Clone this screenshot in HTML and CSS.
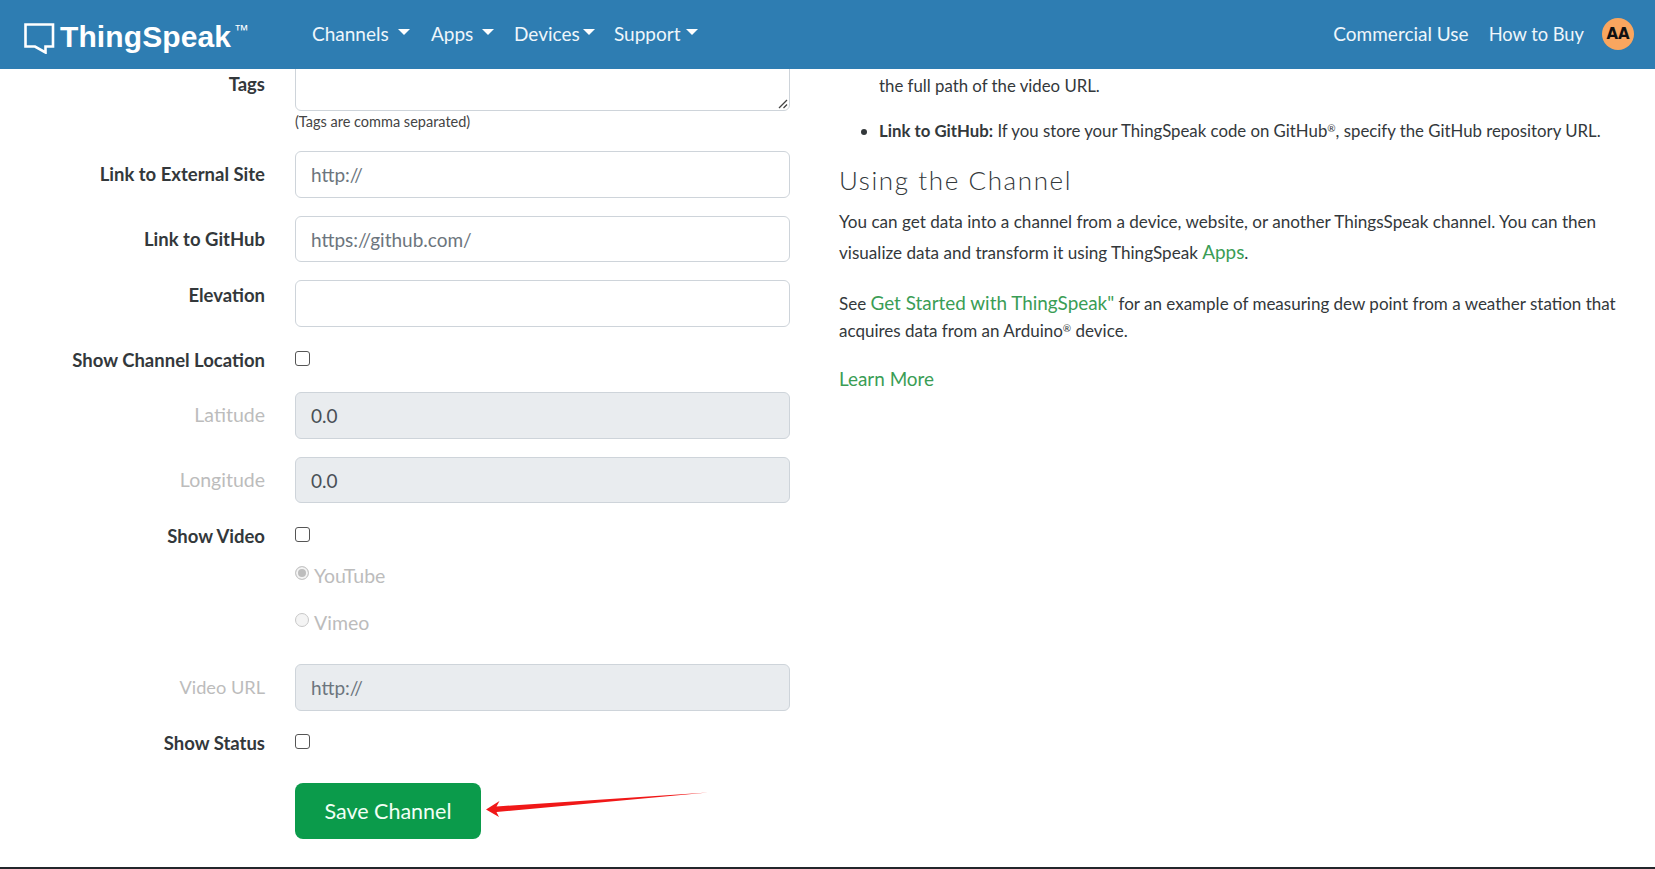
FILE: index.html
```html
<!DOCTYPE html>
<html lang="en">
<head>
<meta charset="utf-8">
<title>ThingSpeak</title>
<link rel="stylesheet" href="styles.css">
</head>
<body>
<header class="nav">
  <a class="brand">
    <svg class="bubble" width="32" height="32" viewBox="0 0 32 32"><path d="M1.5 2.5H29V24.5H21.5V30.5L11 24.5H1.5Z" fill="none" stroke="#fff" stroke-width="2.6"/></svg>
    <span class="brand-name">ThingSpeak</span><span class="tm">™</span>
  </a>
  <nav class="menu">
    <a class="item i1">Channels<i class="caret"></i></a>
    <a class="item i2">Apps<i class="caret"></i></a>
    <a class="item i3">Devices<i class="caret tight"></i></a>
    <a class="item">Support<i class="caret wide"></i></a>
  </nav>
  <div class="right">
    <a class="item">Commercial Use</a>
    <a class="item buy">How to Buy</a>
    <span class="avatar">AA</span>
  </div>
</header>
<main class="page">
  <section class="form">
    <div class="row tags-row"><label class="lab lab-tags">Tags</label>
      <div class="field"><div class="textarea"><svg class="grip" width="12" height="12" viewBox="0 0 12 12"><path d="M11 3L3 11M11 7.5L7.5 11" stroke="#444" stroke-width="1.3"/></svg></div><small class="help">(Tags are comma separated)</small></div></div>
    <div class="row mid"><label class="lab">Link to External Site</label><div class="field"><div class="input ph">http://</div></div></div>
    <div class="row mid"><label class="lab">Link to GitHub</label><div class="field"><div class="input ph">https://github.com/</div></div></div>
    <div class="row elev-row"><label class="lab lab-top">Elevation</label><div class="field"><div class="input"></div></div></div>
    <div class="row check-row"><label class="lab">Show Channel Location</label><div class="field"><span class="box"></span></div></div>
    <div class="row mid"><label class="lab off">Latitude</label><div class="field"><div class="input dis">0.0</div></div></div>
    <div class="row mid"><label class="lab off">Longitude</label><div class="field"><div class="input dis">0.0</div></div></div>
    <div class="row check-row video-row"><label class="lab">Show Video</label><div class="field"><span class="box"></span></div></div>
    <div class="row radio-row"><span class="lab"></span><div class="field radio-line"><span class="radio on"></span><span class="off">YouTube</span></div></div>
    <div class="row radio-row r2"><span class="lab"></span><div class="field radio-line"><span class="radio"></span><span class="off">Vimeo</span></div></div>
    <div class="row mid"><label class="lab off url">Video URL</label><div class="field"><div class="input dis ph">http://</div></div></div>
    <div class="row check-row status-row"><label class="lab">Show Status</label><div class="field"><span class="box"></span></div></div>
    <div class="row"><span class="lab"></span><div class="field"><a class="save">Save Channel</a></div></div>
  </section>
  <section class="help-col">
    <ul class="list">
      <li><b>Video URL:</b> If you have a YouTube<sup class="reg">®</sup> or Vimeo<sup class="reg">®</sup> video that displays your channel information, specify<br>the full path of the video URL.</li>
      <li><b>Link to GitHub:</b> If you store your ThingSpeak code on GitHub<sup class="reg">®</sup>, specify the GitHub repository URL.</li>
    </ul>
    <h2 class="heading">Using the Channel</h2>
    <p class="p1">You can get data into a channel from a device, website, or another ThingsSpeak channel. You can then visualize data and transform it using ThingSpeak <a class="link big">Apps</a>.</p>
    <p class="p2">See <a class="link big">Get Started with ThingSpeak"</a> for an example of measuring dew point from a weather station that acquires data from an Arduino<sup class="reg">®</sup> device.</p>
    <p class="p3"><a class="link big">Learn More</a></p>
  </section>
  <svg class="arrow" width="230" height="32" viewBox="0 0 230 32"><path d="M0 23.5L13.5 15L10.5 20.5L222 6.5L10.5 26L13 31Z" fill="#f01818"/></svg>
</main>
<div class="foot"></div>
</body>
</html>
```
FILE: styles.css
```css
* { box-sizing: border-box; }
html, body { margin: 0; height: 869px; overflow: hidden; background: #fff; }
body { font-family: Lato, "Noto Sans", sans-serif; font-size: 17px; color: #33383b; display: flex; flex-direction: column; }

.nav { height: 69px; flex: none; background: #2e7db2; display: flex; align-items: center; padding: 0 21px 0 24px; color: #fff; position: relative; z-index: 2; }
.brand { display: flex; align-items: flex-start; width: 288px; height: 32px; margin-top: 7px; }
.brand-name { font-family: "Liberation Sans", sans-serif; font-weight: 700; font-size: 30px; letter-spacing: .1px; line-height: 32px; margin-left: 4px; margin-top: -1px; }
.tm { font-family: "Liberation Sans", sans-serif; font-size: 15px; line-height: 20px; margin-top: -2px; margin-left: 3px; }
.menu { display: flex; margin-top: -2px; }
.item { font-size: 19px; color: #eef6fb; line-height: 24px; white-space: nowrap; }
.menu .item { display: flex; align-items: center; }
.i1 { width: 119px; }
.i2 { width: 83px; }
.i3 { width: 100px; }
.caret { display: block; width: 0; height: 0; margin: 0 0 3px 9px; border: 6px solid transparent; border-top-color: #fff; border-bottom: 0; }
.caret.tight { margin-left: 3px; }
.caret.wide { margin-left: 5px; }
.right { margin-left: auto; display: flex; align-items: center; gap: 20px; margin-top: -2px; }
.item.buy { font-size: 18.3px; }
.avatar { width: 32px; height: 32px; margin-left: -2px; border-radius: 50%; background: #f9a65f; color: #111; font-family: "DejaVu Sans", sans-serif; font-weight: 700; font-size: 15px; display: flex; align-items: center; justify-content: center; }

.page { flex: 1; position: relative; overflow: hidden; display: flex; }
.form { width: 839px; flex: none; margin-top: -40px; font-size: 19px; }
.row { display: grid; grid-template-columns: 265px 495px; column-gap: 30px; }
.lab { text-align: right; font-weight: 700; font-size: 18.5px; color: #33383b; line-height: 24px; }
.mid { align-items: center; height: 46.5px; margin-bottom: 18px; }
.lab.off, .off { color: #bcbcbc; }
.lab.off { font-size: 19.5px; font-weight: 400; }
.lab.off.url { font-size: 18.2px; }
.off { font-size: 19.5px; }
.lab-top { padding-top: 3px; }
.tags-row { height: 122px; }
.lab-tags { padding-top: 43px; }
.textarea { height: 82px; border: 1px solid #ced4da; border-radius: 6px; position: relative; }
.grip { position: absolute; right: 1px; bottom: 1px; }
.help { display: block; font-size: 14.5px; color: #444; line-height: 20px; margin-top: 1px; }
.input { height: 46.5px; border: 1px solid #ced4da; border-radius: 6px; padding: 0 15px; line-height: 45px; color: #495057; }
.input.ph { color: #6c757d; }
.dis { background: #e9ecef; }
.elev-row { height: 46.5px; margin-bottom: 20px; }
.box { display: block; width: 15px; height: 15px; border: 1.5px solid #555; border-radius: 3px; background: #fff; margin-top: 4px; }
.check-row { height: 25px; margin-bottom: 20.5px; }
.check-row .lab { line-height: 26px; }
.video-row { height: 27px; padding-top: 2px; margin-bottom: 14px; }
.radio-row { height: 26px; margin-bottom: 21px; }
.radio-line { display: flex; align-items: center; gap: 5px; }
.r2 { margin-bottom: 29px; }
.radio { width: 14px; height: 14px; border-radius: 50%; border: 1px solid #c8c8c8; background: #f4f4f4; flex: none; margin-bottom: 4px; }
.radio.on { background: #bdbdbd; box-shadow: inset 0 0 0 2px #f4f4f4; }
.status-row { height: 26px; padding-top: 1px; margin-bottom: 28px; }
.save { display: flex; width: 186px; height: 56px; align-items: center; justify-content: center; background: #0b9b4b; color: #f2fff5; border-radius: 8px; font-size: 21.5px; font-weight: 400; }

.help-col { flex: 1; margin-top: -22px; padding-right: 20px; line-height: 28px; }
.list { margin: 0 0 2px; padding: 0 0 0 40px; font-size: 16.8px; }
.list li { margin-bottom: 19px; line-height: 26px; }
.reg { font-size: 10px; line-height: 0; vertical-align: 5px; }
.heading { font-size: 26px; font-weight: 300; letter-spacing: 1.6px; line-height: 34px; margin: 0 0 10px; color: #33383b; }
.p1 { margin: 0 0 21px; line-height: 30px; font-size: 17.1px; }
.p2 { margin: 0 0 21px; line-height: 27px; }
.p3 { margin: 0; line-height: 27px; }
.link { color: #3a9d55; }
.big { font-size: 18.9px; }
.arrow { position: absolute; left: 486px; top: 717px; }
.foot { height: 2px; flex: none; background: #23262b; }
```
